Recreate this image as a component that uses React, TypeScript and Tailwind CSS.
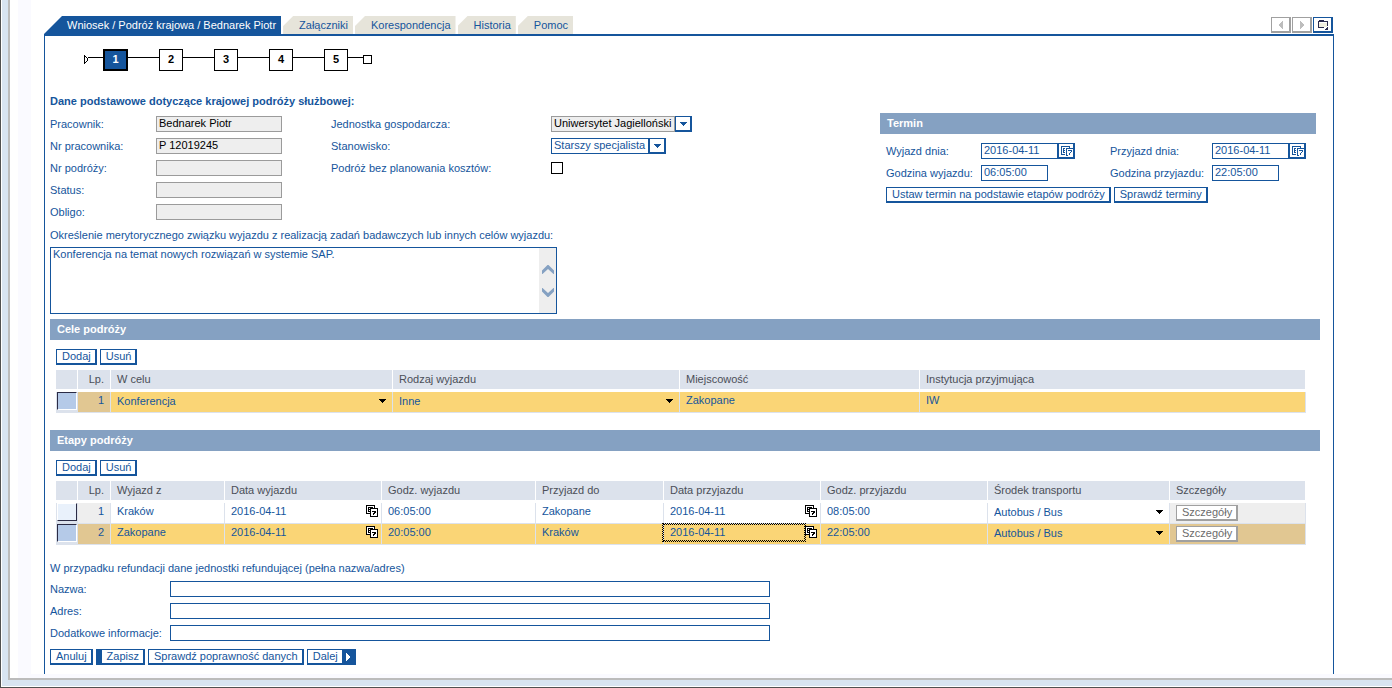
import * as React from "react";
import { clsx } from "clsx";

const TABS = ["Załączniki", "Korespondencja", "Historia", "Pomoc"];
const STEPS = [1, 2, 3, 4, 5];
const PERSON_FIELDS = [
    { label: "Pracownik:", value: "Bednarek Piotr" },
    { label: "Nr pracownika:", value: "P 12019245" },
    { label: "Nr podróży:", value: "" },
    { label: "Status:", value: "" },
    { label: "Obligo:", value: "" },
];
const REFUND_FIELDS = ["Nazwa:", "Adres:", "Dodatkowe informacje:"];
const STAGES = [
    { from: "Kraków", dateFrom: "2016-04-11", timeFrom: "06:05:00", to: "Zakopane", dateTo: "2016-04-11", timeTo: "08:05:00" },
    { from: "Zakopane", dateFrom: "2016-04-11", timeFrom: "20:05:00", to: "Kraków", dateTo: "2016-04-11", timeTo: "22:05:00" },
];

// Two overlapping calendar sheets, used inside table cells
function CalendarIcon() {
    return (
        <svg viewBox="0 0 12 12" shapeRendering="crispEdges" fill="none" className="h-3 w-3 shrink-0" aria-hidden="true">
            <path d="M0 0h9v9H0z" fill="currentColor" />
            <path d="M1 1h7v7H1z" fill="#fff" />
            <path d="M2 2h5v1H3v1h1v1H3v1h1v1H2z" fill="currentColor" />
            <path d="M4 3h8v9H4z" fill="currentColor" />
            <path d="M5 4h6v7H5z" fill="#fff" />
            <path d="M6 6h4v2H9v1H8v1H7V8h1V7H6z" fill="currentColor" />
        </svg>
    );
}

// Compact variant for the bordered picker button
function PickerIcon() {
    return (
        <svg viewBox="0 0 12 10" shapeRendering="crispEdges" fill="none" className="ml-px h-[10px] w-3 shrink-0" aria-hidden="true">
            <path d="M0 0h9v2H8V1H1v7h3v1H0z" fill="currentColor" />
            <path d="M2 2h2v1H3v1h1v1H3v1h1v1H2z" fill="currentColor" />
            <path d="M5 2h7v1H6v6h1v1H5z" fill="currentColor" />
            <path d="M7 4h4v2h-1v1H9v2H8V7h1V6h1V5H7z" fill="currentColor" />
        </svg>
    );
}

function CaretIcon({ className }: { className?: string }) {
    return (
        <svg viewBox="0 0 7 4" shapeRendering="crispEdges" className={clsx("h-1 w-[7px]", className)} aria-hidden="true">
            <path d="M0 0h7v1H6v1H5v1H4v1H3V3H2V2H1V1H0z" fill="currentColor" />
        </svg>
    );
}

interface ActionButtonProps {
    children: React.ReactNode;
    primary?: boolean;
    next?: boolean;
    disabled?: boolean;
}

function ActionButton({ children, primary, next, disabled }: ActionButtonProps) {
    return (
        <button
            type="button"
            disabled={disabled}
            className={clsx(
                "flex h-4 items-center whitespace-nowrap border-t border-r-2 border-b-2 bg-white leading-3",
                disabled ? "border-[#a0a0a0] text-[#6b6b6b]" : "border-[#15559c] text-[#15559c]",
                primary ? "border-l-[6px]" : "border-l",
                next ? "gap-1 pl-[5px]" : "pr-1 pb-px pl-[5px]"
            )}
        >
            {next ? <span className="pb-px">{children}</span> : children}
            {next && (
                <span className="flex h-[13px] w-3 items-center justify-center bg-[#15559c]">
                    <svg viewBox="0 0 4 8" shapeRendering="crispEdges" className="h-2 w-1" aria-hidden="true">
                        <path d="M0 0h1v1h1v1h1v1h1v2H3v1H2v1H1v1H0z" fill="#fff" />
                    </svg>
                </span>
            )}
        </button>
    );
}

function SectionBar({ children }: { children: React.ReactNode }) {
    return <h2 className="flex h-[21px] items-center bg-[#85a1c2] px-[7px] pb-px font-bold text-white">{children}</h2>;
}

function TextField({ label, value, readOnly, className }: { label: string; value?: string; readOnly?: boolean; className?: string }) {
    const id = React.useId();
    return (
        <>
            <label htmlFor={id}>{label}</label>
            <input
                id={id}
                defaultValue={value}
                readOnly={readOnly}
                className={clsx(
                    "h-4 border px-[2px] pb-[2px] leading-3 outline-none",
                    readOnly ? "border-[#9b9b9b] bg-[#eeeeee] text-black" : "border-[#15559c] bg-white",
                    className
                )}
            />
        </>
    );
}

function DateField({ label, value }: { label: string; value: string }) {
    const id = React.useId();
    return (
        <>
            <label htmlFor={id}>{label}</label>
            <div className="flex h-4">
                <input id={id} defaultValue={value} className="h-4 w-[77px] border border-[#15559c] bg-white px-[2px] pb-[2px] leading-3 outline-none" />
                <button type="button" aria-label="Kalendarz" className="flex h-4 w-[17px] items-center justify-center border-t border-r-2 border-b-2 border-l border-[#15559c] bg-white">
                    <PickerIcon />
                </button>
            </div>
        </>
    );
}

function ComboField({ label, value, disabled, className }: { label: string; value: string; disabled?: boolean; className: string }) {
    const id = React.useId();
    return (
        <>
            <label htmlFor={id}>{label}</label>
            <div className="flex h-4">
                <select
                    id={id}
                    disabled={disabled}
                    className={clsx(
                        "h-4 appearance-none border px-[2px] pb-px leading-[13px] opacity-100 outline-none",
                        disabled ? "border-[#9b9b9b] bg-[#eeeeee] text-black" : "border-[#15559c] bg-white",
                        className
                    )}
                >
                    <option>{value}</option>
                </select>
                <span className="flex h-4 w-[17px] items-center justify-center border-t border-r-2 border-b-2 border-l border-[#15559c]">
                    <CaretIcon />
                </span>
            </div>
        </>
    );
}

function HeaderCell({ children, right }: { children?: React.ReactNode; right?: boolean }) {
    return (
        <th
            scope="col"
            className={clsx(
                "h-[22px] border-r border-b-[3px] border-white bg-[#dce2ec] px-[6px] pb-px align-top leading-[18px] font-normal text-[#4b4f58]",
                right ? "text-right" : "text-left"
            )}
        >
            {children}
        </th>
    );
}

function DataCell({ children }: { children: React.ReactNode }) {
    return <td className="h-[21px] border-r border-b border-[#dce2ec] p-0 align-top">{children}</td>;
}

function RowLead({ index, selected }: { index: number; selected?: boolean }) {
    return (
        <>
            <td className="h-[21px] bg-[#dce2ec] p-0 pl-px align-top">
                <button
                    type="button"
                    aria-label={`Wiersz ${index}`}
                    aria-pressed={!!selected}
                    className={clsx(
                        "block h-[18px] w-5 border",
                        selected
                            ? "border-t-[#2b2b45] border-r-white border-b-white border-l-[#2b2b45] bg-[#b5cae8]"
                            : "border-t-white border-r-[#2b2b45] border-b-[#2b2b45] border-l-white bg-[#e9f1fb]"
                    )}
                />
            </td>
            <td className={clsx("h-[21px] border-r border-b border-[#dce2ec] p-0 pr-[6px] text-right align-top", selected ? "bg-[#e1c792]" : "bg-[#eeeeee]")}>
                {index}
            </td>
        </>
    );
}

function CellInput({ label, value }: { label: string; value: string }) {
    return <input aria-label={label} defaultValue={value} className="block h-4 w-full bg-transparent px-[6px] outline-none" />;
}

function CellDate({ label, value, active }: { label: string; value: string; active?: boolean }) {
    return (
        <div className="flex">
            <input
                aria-label={label}
                defaultValue={value}
                className={clsx(
                    "block h-[17px] min-w-0 flex-1 bg-transparent px-[6px] pb-px",
                    active ? "-ml-px border border-dotted border-black pb-0 outline-1 outline-dotted outline-black" : "outline-none"
                )}
            />
            <button type="button" aria-label="Kalendarz" className="mt-[2px] mr-[3px] h-3 w-3 text-black">
                <CalendarIcon />
            </button>
        </div>
    );
}

function CellSelect({ label, value }: { label: string; value: string }) {
    return (
        <div className="relative">
            <select aria-label={label} className="block h-[18px] w-full appearance-none bg-transparent px-[6px] outline-none">
                <option>{value}</option>
            </select>
            <CaretIcon className="pointer-events-none absolute top-[7px] right-[6px] text-black" />
        </div>
    );
}

function Stepper() {
    return (
        <ol className="ml-[34px] flex h-[22px] items-center font-bold text-black">
            <li className="flex items-center">
                <svg viewBox="0 0 19 22" shapeRendering="crispEdges" className="h-[22px] w-[19px]" aria-hidden="true">
                    <path d="M0 6h1v1h1v1h1v1h1v3H3v1H2v1H1v1H0zM1 8v5h1v-1h1V9H2V8z" fill="#000" fillRule="evenodd" />
                    <path d="M4 8h15v1H4z" fill="#000" />
                </svg>
            </li>
            {STEPS.map((step) => (
                <li key={step} className="flex items-center">
                    {step > 1 && <span className="mb-[5px] h-px w-[31px] bg-black" />}
                    <a
                        href={`#krok-${step}`}
                        aria-current={step === 1 ? "step" : undefined}
                        className={clsx(
                            "flex h-[22px] items-center justify-center border-black pb-[2px]",
                            step === 1 ? "w-[25px] border-2 bg-[#15559c] text-white" : "w-6 border"
                        )}
                    >
                        {step}
                    </a>
                </li>
            ))}
            <li className="flex items-center">
                <span className="mb-[5px] h-px w-[15px] bg-black" />
                <span className="mb-px h-[9px] w-[9px] border border-black" />
            </li>
        </ol>
    );
}

function Toolbar() {
    return (
        <div className="mt-[9px] mb-[5px] flex gap-[3px]">
            <ActionButton>Dodaj</ActionButton>
            <ActionButton>Usuń</ActionButton>
        </div>
    );
}

function GoalsTable() {
    return (
        <table className="w-full table-fixed border-separate border-spacing-0">
            <colgroup>
                <col className="w-[22px]" />
                <col className="w-[33px]" />
                <col className="w-[282px]" />
                <col className="w-[287px]" />
                <col className="w-[240px]" />
                <col />
            </colgroup>
            <thead>
                <tr>
                    <HeaderCell />
                    <HeaderCell right>Lp.</HeaderCell>
                    <HeaderCell>W celu</HeaderCell>
                    <HeaderCell>Rodzaj wyjazdu</HeaderCell>
                    <HeaderCell>Miejscowość</HeaderCell>
                    <HeaderCell>Instytucja przyjmująca</HeaderCell>
                </tr>
            </thead>
            <tbody>
                <tr className="bg-[#fad576]">
                    <RowLead index={1} selected />
                    <DataCell><CellSelect label="W celu" value="Konferencja" /></DataCell>
                    <DataCell><CellSelect label="Rodzaj wyjazdu" value="Inne" /></DataCell>
                    <DataCell><CellInput label="Miejscowość" value="Zakopane" /></DataCell>
                    <DataCell><CellInput label="Instytucja przyjmująca" value="IW" /></DataCell>
                </tr>
            </tbody>
        </table>
    );
}

function StagesTable() {
    return (
        <table className="w-full table-fixed border-separate border-spacing-0">
            <colgroup>
                <col className="w-[22px]" />
                <col className="w-[33px]" />
                <col className="w-[114px]" />
                <col className="w-[157px]" />
                <col className="w-[154px]" />
                <col className="w-[128px]" />
                <col className="w-[157px]" />
                <col className="w-[167px]" />
                <col className="w-[182px]" />
                <col />
            </colgroup>
            <thead>
                <tr>
                    <HeaderCell />
                    <HeaderCell right>Lp.</HeaderCell>
                    <HeaderCell>Wyjazd z</HeaderCell>
                    <HeaderCell>Data wyjazdu</HeaderCell>
                    <HeaderCell>Godz. wyjazdu</HeaderCell>
                    <HeaderCell>Przyjazd do</HeaderCell>
                    <HeaderCell>Data przyjazdu</HeaderCell>
                    <HeaderCell>Godz. przyjazdu</HeaderCell>
                    <HeaderCell>Środek transportu</HeaderCell>
                    <HeaderCell>Szczegóły</HeaderCell>
                </tr>
            </thead>
            <tbody>
                {STAGES.map((stage, i) => {
                    const selected = i === 1;
                    return (
                        <tr key={stage.from} className={selected ? "bg-[#fad576]" : "bg-white"}>
                            <RowLead index={i + 1} selected={selected} />
                            <DataCell><CellInput label="Wyjazd z" value={stage.from} /></DataCell>
                            <DataCell><CellDate label="Data wyjazdu" value={stage.dateFrom} /></DataCell>
                            <DataCell><CellInput label="Godz. wyjazdu" value={stage.timeFrom} /></DataCell>
                            <DataCell><CellInput label="Przyjazd do" value={stage.to} /></DataCell>
                            <DataCell><CellDate label="Data przyjazdu" value={stage.dateTo} active={selected} /></DataCell>
                            <DataCell><CellInput label="Godz. przyjazdu" value={stage.timeTo} /></DataCell>
                            <DataCell><CellSelect label="Środek transportu" value="Autobus / Bus" /></DataCell>
                            <td className={clsx("h-[21px] border-r border-b border-[#dce2ec] p-0 px-[6px]", selected ? "bg-[#e1c792]" : "bg-[#eeeeee]")}>
                                <ActionButton disabled>Szczegóły</ActionButton>
                            </td>
                        </tr>
                    );
                })}
            </tbody>
        </table>
    );
}

export default function App() {
    return (
        <div className="flex min-h-screen border-b border-l border-[#505050] bg-white pb-px pl-px font-['Liberation_Sans',Arial,sans-serif] text-[11px] leading-4 text-[#15559c]">
            <div className="flex flex-1 bg-[#d8e4f1] pb-[6px] pl-[6px]">
                <div className="flex flex-1 border-b-2 border-l-2 border-[#bcbcbc] bg-white pl-2">
                    <div className="w-[13px] shrink-0 bg-[#fafaff]" />
                    <div className="flex min-w-0 flex-1 flex-col border-b-4 border-[#fafaff] pt-4 pr-[58px] pl-[13px]">
                        {/* Tab strip */}
                        <header className="flex items-end">
                            <nav className="flex h-[18px] gap-[2px] whitespace-nowrap">
                                <a href="#wniosek" aria-current="page" className="flex items-center bg-[#15559c] pr-[5px] pl-[23px] text-white [clip-path:polygon(18px_0,100%_0,100%_100%,0_100%)]">
                                    Wniosek / Podróż krajowa / Bednarek Piotr
                                </a>
                                {TABS.map((tab) => (
                                    <a key={tab} href={`#${tab}`} className="flex items-center bg-[#e6e4da] pr-[5px] pl-4 [clip-path:polygon(10px_0,100%_0,100%_100%,0_100%,0_10px)]">
                                        {tab}
                                    </a>
                                ))}
                            </nav>
                            <div className="mr-px mb-px ml-auto flex gap-px">
                                <button type="button" aria-label="Wstecz" disabled className="flex h-4 w-5 items-center justify-center border-t border-r-2 border-b-2 border-l border-[#a0a0a0]">
                                    <svg viewBox="0 0 4 8" shapeRendering="crispEdges" className="h-2 w-1" aria-hidden="true">
                                        <path d="M4 0v8H3V7H2V6H1V5H0V3h1V2h1V1h1V0z" fill="#bdbdbd" />
                                    </svg>
                                </button>
                                <button type="button" aria-label="Dalej" disabled className="flex h-4 w-5 items-center justify-center border-t border-r-2 border-b-2 border-l border-[#a0a0a0]">
                                    <svg viewBox="0 0 4 8" shapeRendering="crispEdges" className="h-2 w-1" aria-hidden="true">
                                        <path d="M0 0h1v1h1v1h1v1h1v2H3v1H2v1H1v1H0z" fill="#bdbdbd" />
                                    </svg>
                                </button>
                                <button type="button" aria-label="Menu zakładek" className="flex h-4 w-5 items-center justify-center border-t border-r-2 border-b-2 border-l border-[#15559c]">
                                    <svg viewBox="0 0 10 10" shapeRendering="crispEdges" className="h-[10px] w-[10px]" aria-hidden="true">
                                        <path d="M1 0h5v1h4v5H9V2H1v5h5v1H0V1h1z" fill="#2b2b4d" />
                                        <path d="M1 3h8v4H1z" fill="#f1efdf" />
                                        <path d="M9 7h1v3H7V9h1V8h1z" fill="#2b2b4d" />
                                    </svg>
                                </button>
                            </div>
                        </header>

                        <main className="flex-1 border-t-2 border-r border-l border-[#15559c] pt-[13px] pr-[13px] pb-[9px] pl-[5px]">
                            <Stepper />

                            <h1 className="mt-[22px] mb-1 font-bold">Dane podstawowe dotyczące krajowej podróży służbowej:</h1>

                            <div className="flex items-start">
                                <div className="grid w-[281px] auto-rows-[22px] grid-cols-[106px_126px] items-center">
                                    {PERSON_FIELDS.map((field) => (
                                        <TextField key={field.label} label={field.label} value={field.value} readOnly />
                                    ))}
                                </div>
                                <div className="grid auto-rows-[22px] grid-cols-[220px_auto] items-center">
                                    <ComboField label="Jednostka gospodarcza:" value="Uniwersytet Jagielloński" disabled className="w-[124px]" />
                                    <ComboField label="Stanowisko:" value="Starszy specjalista" className="w-[98px]" />
                                    <label htmlFor="bez-kosztow">Podróż bez planowania kosztów:</label>
                                    <input id="bez-kosztow" type="checkbox" className="h-3 w-3 appearance-none border border-black checked:bg-[#15559c]" />
                                </div>
                                <section className="mr-1 ml-auto w-[436px]">
                                    <SectionBar>Termin</SectionBar>
                                    <div className="grid auto-rows-[22px] grid-cols-[95px_129px_102px_auto] items-center pt-[6px] pl-[6px]">
                                        <DateField label="Wyjazd dnia:" value="2016-04-11" />
                                        <DateField label="Przyjazd dnia:" value="2016-04-11" />
                                        <TextField label="Godzina wyjazdu:" value="06:05:00" className="w-[67px]" />
                                        <TextField label="Godzina przyjazdu:" value="22:05:00" className="w-[67px]" />
                                        <div className="col-span-4 flex gap-[3px]">
                                            <ActionButton>Ustaw termin na podstawie etapów podróży</ActionButton>
                                            <ActionButton>Sprawdź terminy</ActionButton>
                                        </div>
                                    </div>
                                </section>
                            </div>

                            <label htmlFor="uzasadnienie" className="flex h-6 items-center">
                                Określenie merytorycznego związku wyjazdu z realizacją zadań badawczych lub innych celów wyjazdu:
                            </label>
                            <div className="flex h-[67px] w-[507px] border border-[#15559c]">
                                <textarea
                                    id="uzasadnienie"
                                    defaultValue="Konferencja na temat nowych rozwiązań w systemie SAP."
                                    className="flex-1 resize-none overflow-hidden px-[2px] leading-[13px] outline-none"
                                />
                                <div className="flex w-[17px] flex-col items-center justify-center gap-[14px] bg-[#eeeeee] text-[#85a1c2]">
                                    <svg viewBox="0 0 12 9" className="h-[9px] w-3" aria-hidden="true">
                                        <path d="M0 5.5L5.5 0h1L12 5.5V9h-.5L6 4 .5 9H0z" fill="currentColor" />
                                    </svg>
                                    <svg viewBox="0 0 12 9" className="h-[9px] w-3" aria-hidden="true">
                                        <path d="M0 3.500L5.500 9h1L12 3.500V0h-.5L6 5 .5 0H0z" fill="currentColor" />
                                    </svg>
                                </div>
                            </div>

                            <section className="mt-[5px]">
                                <SectionBar>Cele podróży</SectionBar>
                                <div className="pr-[14px] pl-[6px]">
                                    <Toolbar />
                                    <GoalsTable />
                                </div>
                            </section>

                            <section className="mt-[17px]">
                                <SectionBar>Etapy podróży</SectionBar>
                                <div className="pr-[14px] pl-[6px]">
                                    <Toolbar />
                                    <StagesTable />
                                </div>
                            </section>

                            <p className="mt-[13px] h-5 leading-5">W przypadku refundacji dane jednostki refundującej (pełna nazwa/adres)</p>
                            <div className="grid auto-rows-[22px] grid-cols-[120px_600px] items-center">
                                {REFUND_FIELDS.map((label) => (
                                    <TextField key={label} label={label} />
                                ))}
                            </div>

                            <div className="mt-[5px] flex gap-[3px]">
                                <ActionButton>Anuluj</ActionButton>
                                <ActionButton primary>Zapisz</ActionButton>
                                <ActionButton>Sprawdź poprawność danych</ActionButton>
                                <ActionButton next>Dalej</ActionButton>
                            </div>
                        </main>
                    </div>
                </div>
            </div>
        </div>
    );
}
